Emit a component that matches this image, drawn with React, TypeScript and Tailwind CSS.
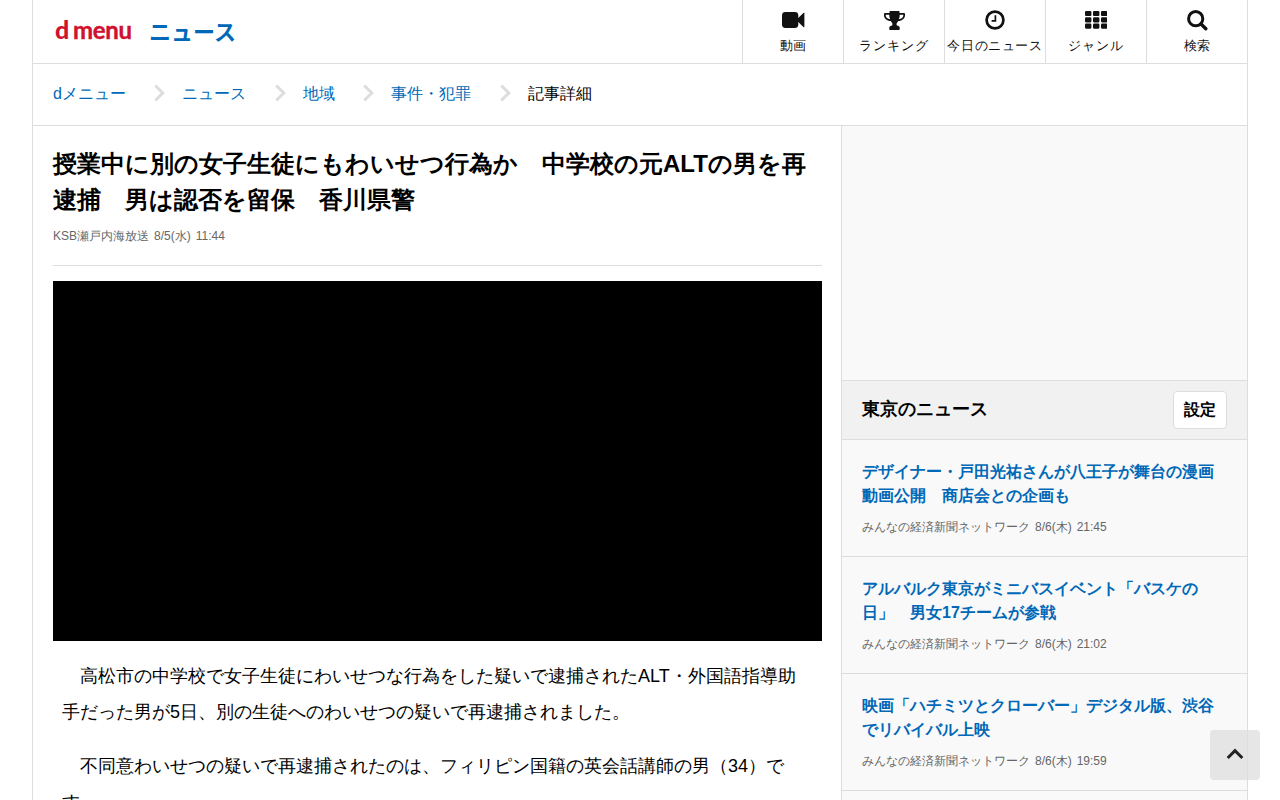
import React from "react";

const VideoIcon = () => (
  <svg viewBox="0 0 23 16" className="h-4 w-[23px]" fill="currentColor">
    <rect x="0" y="0" width="16.3" height="16" rx="3.4" />
    <path d="M16 6.3L21.4 1Q22.4 .4 22.4 1.6V14.4Q22.4 15.6 21.4 15L16 9.7Z" />
  </svg>
);

const TrophyIcon = () => (
  <svg viewBox="0 0 21 19" className="h-[19px] w-[21px]" fill="currentColor">
    <path d="M5.5 0.5Q5.5 0 6.2 0H14.8Q15.5 0 15.5 .5V2H20Q21 2 21 3V4.5C21 7.5 18 9.8 14.4 10.1Q12.9 11.6 12.5 12.7Q12.3 14 13.4 14.7H14Q15.6 15 15.7 16.6V18.2Q15.7 19 15 19H6Q5.3 19 5.3 18.2V16.6Q5.4 15 7 14.7H7.6Q8.7 14 8.5 12.7Q8.1 11.6 6.6 10.1C3 9.8 0 7.5 0 4.5V3Q0 2 1 2H5.5ZM1.7 3.7V4.5C1.7 6.4 3.5 7.8 6.1 8.3Q5.2 6.2 5.3 3.7ZM19.3 3.7H15.7Q15.8 6.2 14.9 8.3C17.5 7.8 19.3 6.4 19.3 4.5Z" />
  </svg>
);

const ClockIcon = () => (
  <svg viewBox="0 0 20 20" className="h-5 w-5" fill="none" stroke="currentColor">
    <circle cx="10" cy="10" r="8.4" strokeWidth="2.7" />
    <path d="M10.4 5.2V10.8H6.6" strokeWidth="1.7" />
  </svg>
);

const GridIcon = () => (
  <svg viewBox="0 0 22 18" className="h-[18px] w-[22px]" fill="currentColor">
    {[0, 8, 16].map((x) =>
      [0, 6.3, 12.6].map((y) => (
        <rect key={`${x}-${y}`} x={x} y={y} width="6.4" height="5.1" rx="1.1" />
      ))
    )}
  </svg>
);

const SearchIcon = () => (
  <svg viewBox="0 0 21 21" className="h-[21px] w-[21px]" fill="none" stroke="currentColor">
    <circle cx="8.7" cy="8.7" r="7.1" strokeWidth="3" />
    <path d="M14 14L18.8 18.8" strokeWidth="3.4" strokeLinecap="round" />
  </svg>
);

const navItems = [
  { label: "動画", Icon: VideoIcon, tracking: "tracking-normal" },
  { label: "ランキング", Icon: TrophyIcon, tracking: "tracking-[1px]" },
  { label: "今日のニュース", Icon: ClockIcon, tracking: "tracking-[0.6px]" },
  { label: "ジャンル", Icon: GridIcon, tracking: "tracking-[1px]" },
  { label: "検索", Icon: SearchIcon, tracking: "tracking-normal" },
];

const crumbs = ["dメニュー", "ニュース", "地域", "事件・犯罪"];

const localNews = [
  {
    title: "デザイナー・戸田光祐さんが八王子が舞台の漫画動画公開　商店会との企画も",
    time: "21:45",
  },
  {
    title: "アルバルク東京がミニバスイベント「バスケの日」　男女17チームが参戦",
    time: "21:02",
  },
  {
    title: "映画「ハチミツとクローバー」デジタル版、渋谷でリバイバル上映",
    time: "19:59",
  },
];

function Header() {
  return (
    <header className="flex h-16 justify-between border-b border-[#ddd]">
      <a className="flex items-center pl-[22px]" href="#">
        <span className="flex w-[78px] items-baseline pb-[5px] font-['Lato',sans-serif] leading-none text-[#d0112f]">
          <span className="w-[18px] text-[25px] font-black">d</span>
          <span className="text-[24px] font-bold tracking-[-0.3px] [-webkit-text-stroke:0.4px_#d0112f]">menu</span>
        </span>
        <span className="ml-4 pb-1 font-['Noto_Sans_CJK_JP',sans-serif] text-[22px] font-bold leading-none text-[#0068b7]">
          ニュース
        </span>
      </a>
      <nav className="flex">
        {navItems.map(({ label, Icon, tracking }) => (
          <a
            key={label}
            href="#"
            className="flex w-[101px] flex-col items-center whitespace-nowrap border-l border-[#ddd] pt-2 text-[#111]"
          >
            <span className="flex h-6 items-center">
              <Icon />
            </span>
            <span className={`mt-1 text-[13.44px] leading-5 ${tracking}`}>{label}</span>
          </a>
        ))}
      </nav>
    </header>
  );
}

function Breadcrumb() {
  return (
    <nav className="flex h-[62px] items-center border-b border-[#ddd] px-5 pb-0.5 text-base">
      {crumbs.map((c) => (
        <React.Fragment key={c}>
          <a href="#" className="text-[#0068b7]">
            {c}
          </a>
          <span className="flex w-[56.45px] pb-0.5 pl-[28.4px]">
            <svg
              viewBox="0 0 11 18"
              className="h-[18px] w-[11px]"
              fill="none"
              stroke="#ddd"
              strokeWidth="3"
            >
              <path d="M1.3 1.5L8.8 9L1.3 16.5" />
            </svg>
          </span>
        </React.Fragment>
      ))}
      <span>記事詳細</span>
    </nav>
  );
}

function Article() {
  return (
    <main className="w-[808px] shrink-0 pl-5 pr-[19px] pt-5">
      <h1 className="text-2xl font-bold leading-9">
        授業中に別の女子生徒にもわいせつ行為か　中学校の元ALTの男を再逮捕　男は認否を留保　香川県警
      </h1>
      <p className="mt-[9px] flex gap-[5px] text-xs leading-[18px] text-[#666]">
        <span>KSB瀬戸内海放送</span>
        <span>8/5(水)</span>
        <span>11:44</span>
      </p>
      <hr className="mt-5 border-[#ddd]" />
      <div className="mt-[15px] h-[360px] bg-black" />
      <div className="mt-[17px] space-y-[18px] px-[9px] text-[18px] leading-9">
        <p>
          {"　高松市の中学校で女子生徒にわいせつな行為をした疑いで逮捕されたALT・外国語指導助手だった男が5日、別の生徒へのわいせつの疑いで再逮捕されました。"}
        </p>
        <p>{"　不同意わいせつの疑いで再逮捕されたのは、フィリピン国籍の英会話講師の男（34）です。"}</p>
      </div>
    </main>
  );
}

function Sidebar() {
  return (
    <aside className="min-w-0 flex-1 border-l border-[#ddd] bg-[#f9f9f9]">
      <div className="h-[254px]" />
      <div className="flex h-[60px] items-center justify-between border-y border-[#ddd] bg-[#f1f1f1] px-5">
        <h2 className="pb-0.5 text-[18px] font-bold">東京のニュース</h2>
        <button className="h-[38px] w-[54px] rounded border border-[#ddd] bg-white text-base font-bold">
          設定
        </button>
      </div>
      <ul>
        {localNews.map((n) => (
          <li key={n.time} className="h-[117px] border-b border-[#ddd] px-5 pt-5">
            <a href="#" className="block text-base font-bold leading-6 text-[#0068b7]">
              {n.title}
            </a>
            <p className="mt-2.5 flex gap-[5px] text-xs leading-[18px] text-[#666]">
              <span>みんなの経済新聞ネットワーク</span>
              <span>8/6(木)</span>
              <span>{n.time}</span>
            </p>
          </li>
        ))}
      </ul>
    </aside>
  );
}

export default function App() {
  return (
    <div
      lang="ja"
      className="h-[800px] overflow-hidden bg-white px-8 font-['Liberation_Sans',sans-serif] text-black"
    >
      <div className="h-[820px] border-x border-[#ddd]">
        <Header />
        <Breadcrumb />
        <div className="flex h-[694px]">
          <Article />
          <Sidebar />
        </div>
      </div>
      <button
        aria-label="ページの先頭へ"
        className="fixed bottom-5 right-5 flex h-[50px] w-[50px] items-center justify-center rounded bg-[#ddd]/75 text-[#222]"
      >
        <svg viewBox="0 0 18 12" className="mb-0.5 h-3 w-[18px]" fill="none" stroke="currentColor" strokeWidth="3">
          <path d="M1.7 10L9 2.7L16.3 10" />
        </svg>
      </button>
    </div>
  );
}
